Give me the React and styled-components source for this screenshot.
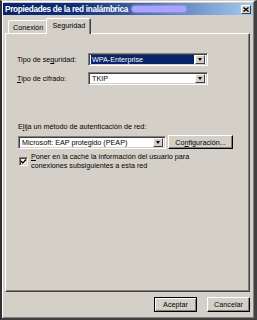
import React from 'react';
import styled, { createGlobalStyle } from 'styled-components';

const GlobalStyle = createGlobalStyle`
	html, body {
		margin: 0;
		padding: 0;
		background: #d4d0c8;
	}
	body {
		font-family: 'Liberation Sans', Arial, sans-serif;
		font-size: 7.2px;
		color: #000;
	}
`;

const Window = styled.div`
	box-sizing: border-box;
	width: 257px;
	height: 320px;
	display: flex;
	flex-direction: column;
	background: #d4d0c8;
	border-left: 2px solid #303030;
	border-top: 1px solid #d4d0c8;
	border-right: 3px solid #404040;
	border-bottom: 2px solid #404040;
	box-shadow: inset 1px 1px 0 #ffffff, inset -1px -1px 0 #808080;
	padding: 2px 0 0 1px;
`;

const TitleBar = styled.div`
	display: flex;
	align-items: center;
	height: 12px;
	margin-right: 1px;
	padding: 0 2px 0 2px;
	background: linear-gradient(90deg, #0a246a 0%, #0f2f7c 30%, #a6caf0 100%);
`;

const TitleText = styled.span`
	color: #ffffff;
	font-weight: bold;
	font-size: 8.2px;
	letter-spacing: -0.3px;
	white-space: nowrap;
`;

const Redacted = styled.span`
	flex: none;
	display: block;
	width: 54px;
	height: 6px;
	margin-left: 4px;
	border-radius: 3px;
	background: #a8a4ff;
	box-shadow: 0 0 2px 1px rgba(160, 156, 255, 0.8);
`;

const CloseButton = styled.div`
	margin-left: auto;
	box-sizing: border-box;
	width: 10px;
	height: 9px;
	display: flex;
	align-items: center;
	justify-content: center;
	background: #d4d0c8;
	border-top: 1px solid #ffffff;
	border-left: 1px solid #ffffff;
	border-right: 1px solid #404040;
	border-bottom: 1px solid #404040;
`;

const Body = styled.div`
	flex: 1;
	display: flex;
	flex-direction: column;
	padding: 4px 4px 0 2px;
`;

const TabStrip = styled.div`
	display: flex;
	align-items: flex-end;
	height: 15px;
	padding-left: 3px;
	position: relative;
	z-index: 1;
	margin-bottom: -1px;
`;

const Tab = styled.div`
	box-sizing: border-box;
	display: flex;
	align-items: center;
	justify-content: center;
	height: ${p => (p.$active ? '16px' : '13px')};
	padding: ${p => (p.$active ? '0 5px 2px 5px' : '0 4px 0 4px')};
	margin: ${p => (p.$active ? '0 0 0 -2px' : '0 0 1px 0')};
	background: #d4d0c8;
	border-top: 1px solid #ffffff;
	border-left: 1px solid #ffffff;
	border-right: 1px solid #404040;
	border-radius: 2px 2px 0 0;
	box-shadow: inset -1px 0 0 #808080;
	white-space: nowrap;
`;

const Panel = styled.div`
	box-sizing: border-box;
	height: 259px;
	display: flex;
	flex-direction: column;
	padding: 19px 10px 0 11px;
	border-top: 1px solid #ffffff;
	border-left: 1px solid #ffffff;
	border-right: 1px solid #404040;
	border-bottom: 1px solid #404040;
	box-shadow: inset -1px -1px 0 #808080;
`;

const FormGrid = styled.div`
	display: grid;
	grid-template-columns: 71px 120px;
	row-gap: 6px;
	align-items: center;
`;

const Label = styled.span`
	white-space: nowrap;
	line-height: 9px;
`;

const Key = styled.u`
	text-decoration: underline;
	text-underline-offset: 1px;
`;

const Select = styled.div`
	box-sizing: border-box;
	display: flex;
	align-items: center;
	width: ${p => p.$width}px;
	height: 13px;
	background: #ffffff;
	border-top: 1px solid #808080;
	border-left: 1px solid #808080;
	border-right: 1px solid #ffffff;
	border-bottom: 1px solid #ffffff;
	box-shadow: inset 1px 1px 0 #404040, inset -1px -1px 0 #d4d0c8;
	padding: 2px;
`;

const SelectValue = styled.span`
	flex: 1;
	height: 9px;
	line-height: 9px;
	padding-left: 1px;
	white-space: nowrap;
	background: ${p => (p.$selected ? '#0a246a' : 'transparent')};
	color: ${p => (p.$selected ? '#ffffff' : '#000000')};
`;

const DropButton = styled.div`
	box-sizing: border-box;
	width: 10px;
	height: 9px;
	margin-left: 1px;
	display: flex;
	align-items: center;
	justify-content: center;
	background: #d4d0c8;
	border-top: 1px solid #ffffff;
	border-left: 1px solid #ffffff;
	border-right: 1px solid #404040;
	border-bottom: 1px solid #404040;
`;

const Arrow = styled.span`
	width: 0;
	height: 0;
	border-left: 2.5px solid transparent;
	border-right: 2.5px solid transparent;
	border-top: 3px solid #000000;
`;

const Section = styled.div`
	display: flex;
	flex-direction: column;
	margin-top: 37px;
	padding-left: 1px;
`;

const MethodRow = styled.div`
	display: flex;
	align-items: center;
	gap: 2px;
	margin-top: 4px;
`;

const Button = styled.div`
	box-sizing: border-box;
	display: flex;
	align-items: center;
	justify-content: center;
	width: ${p => p.$width}px;
	height: ${p => p.$height || 15}px;
	background: #d4d0c8;
	border: 1px solid ${p => (p.$default ? '#000000' : '#ffffff')};
	border-right-color: #000000;
	border-bottom-color: #000000;
	box-shadow: ${p => (p.$default
		? 'inset 1px 1px 0 #ffffff, inset -1px -1px 0 #808080'
		: 'inset -1px -1px 0 #808080')};
	white-space: nowrap;
`;

const CheckRow = styled.div`
	display: flex;
	align-items: flex-start;
	gap: 3px;
	margin-top: 3px;
	padding-left: 1px;
`;

const CheckBox = styled.div`
	box-sizing: border-box;
	flex: none;
	width: 9px;
	height: 9px;
	margin-top: 5px;
	display: flex;
	align-items: center;
	justify-content: center;
	background: #ffffff;
	border-top: 1px solid #808080;
	border-left: 1px solid #808080;
	border-right: 1px solid #ffffff;
	border-bottom: 1px solid #ffffff;
	box-shadow: inset 1px 1px 0 #404040, inset -1px -1px 0 #d4d0c8;
`;

const CheckText = styled.span`
	line-height: 9px;
`;

const Footer = styled.div`
	display: flex;
	justify-content: flex-end;
	gap: 10px;
	padding: 5px 0 0 0;
`;

const App = () => {
	return (
		<>
			<GlobalStyle />
			<Window>
				<TitleBar>
					<TitleText>Propiedades de la red inalámbrica</TitleText>
					<Redacted />
					<CloseButton>
						<svg width="6" height="5" viewBox="0 0 6 5">
							<path d="M0.5 0.5 L5.5 4.5 M5.5 0.5 L0.5 4.5" stroke="#000" strokeWidth="1.3" />
						</svg>
					</CloseButton>
				</TitleBar>
				<Body>
					<TabStrip>
						<Tab>Conexión</Tab>
						<Tab $active>Seguridad</Tab>
					</TabStrip>
					<Panel>
						<FormGrid>
							<Label>Tipo de se<Key>g</Key>uridad:</Label>
							<Select $width={120}>
								<SelectValue $selected>WPA-Enterprise</SelectValue>
								<DropButton><Arrow /></DropButton>
							</Select>
							<Label><Key>T</Key>ipo de cifrado:</Label>
							<Select $width={120}>
								<SelectValue>TKIP</SelectValue>
								<DropButton><Arrow /></DropButton>
							</Select>
						</FormGrid>
						<Section>
							<Label>E<Key>l</Key>ija un método de autenticación de red:</Label>
							<MethodRow>
								<Select $width={148}>
									<SelectValue>Microsoft: EAP protegido (PEAP)</SelectValue>
									<DropButton><Arrow /></DropButton>
								</Select>
								<Button $width={65} $height={14}>Co<Key>n</Key>figuración...</Button>
							</MethodRow>
							<CheckRow>
								<CheckBox>
									<svg width="7" height="7" viewBox="0 0 7 7">
										<path d="M1 3 L2.8 5 L6 1.5" fill="none" stroke="#000" strokeWidth="1.4" />
									</svg>
								</CheckBox>
								<CheckText>
									<Key>P</Key>oner en la caché la información del usuario para<br />
									conexiones subsiguientes a esta red
								</CheckText>
							</CheckRow>
						</Section>
					</Panel>
					<Footer>
						<Button $width={43} $default>Aceptar</Button>
						<Button $width={43}>Cancelar</Button>
					</Footer>
				</Body>
			</Window>
		</>
	);
};

export default App;
